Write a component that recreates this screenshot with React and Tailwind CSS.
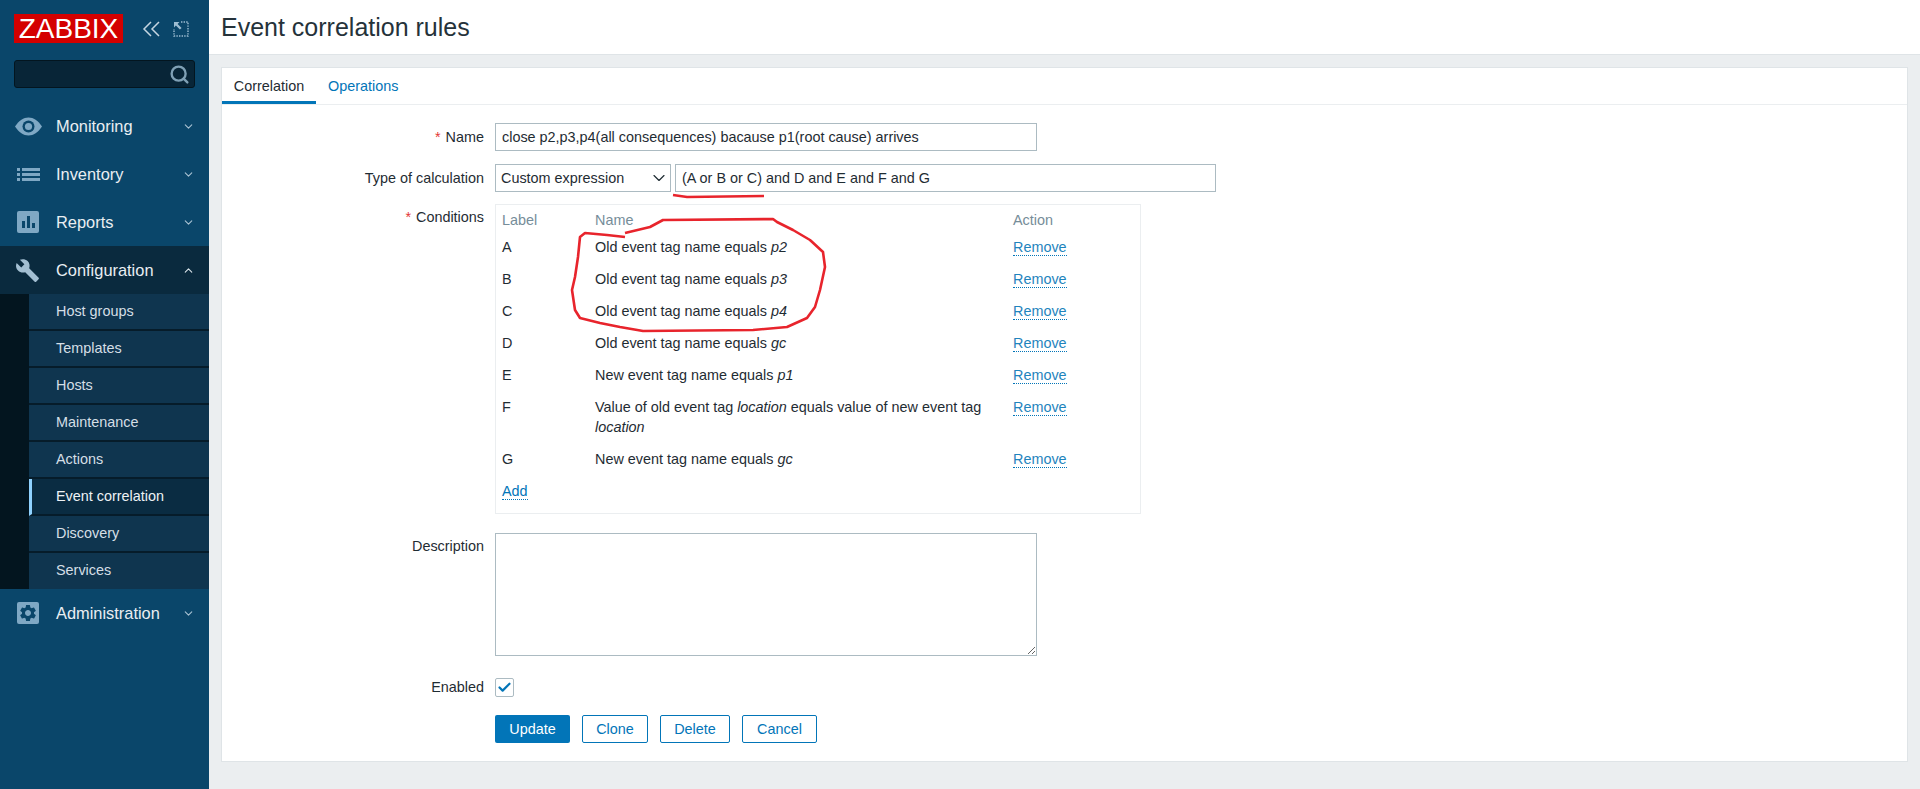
import React from "react";
import { ChevronDown, ChevronUp, Search, Check } from "lucide-react";
import { MdBuild, MdSettings } from "react-icons/md";

const subItems = ["Host groups", "Templates", "Hosts", "Maintenance", "Actions", "Event correlation", "Discovery", "Services"];

const conditions = [
  { label: "A", name: <>Old event tag name equals <i>p2</i></> },
  { label: "B", name: <>Old event tag name equals <i>p3</i></> },
  { label: "C", name: <>Old event tag name equals <i>p4</i></> },
  { label: "D", name: <>Old event tag name equals <i>gc</i></> },
  { label: "E", name: <>New event tag name equals <i>p1</i></> },
  { label: "F", name: <>Value of old event tag <i>location</i> equals value of new event tag <i>location</i></> },
  { label: "G", name: <>New event tag name equals <i>gc</i></> },
];

function EyeIcon() {
  return (
    <svg width="27" height="19" viewBox="0 0 27 19" className="-ml-[2px] text-[#7fa8c4]">
      <path fill="currentColor" d="M0 9.5C4 3.5 8.5.5 13.5.5S23 3.5 27 9.5C23 15.5 18.5 18.5 13.5 18.5S4 15.5 0 9.5Z" />
      <circle cx="13.5" cy="9.5" r="6" fill="#0a466a" />
      <circle cx="13.5" cy="9.5" r="3.6" fill="#7fa8c4" />
    </svg>
  );
}

function ListIcon() {
  return (
    <svg width="23" height="13" viewBox="0 0 23 13" fill="#7fa8c4">
      <rect x="0" y="0" width="3" height="3" />
      <rect x="5" y="0" width="18" height="3" />
      <rect x="0" y="5" width="3" height="3" />
      <rect x="5" y="5" width="18" height="3" />
      <rect x="0" y="10" width="3" height="3" />
      <rect x="5" y="10" width="18" height="3" />
    </svg>
  );
}

function ReportsIcon() {
  return (
    <svg width="22" height="22" viewBox="0 0 22 22">
      <rect width="22" height="22" rx="2" fill="#7fa8c4" />
      <rect x="5" y="10" width="3" height="7" fill="#0a466a" />
      <rect x="10" y="5" width="3" height="12" fill="#0a466a" />
      <rect x="15" y="12" width="3" height="5" fill="#0a466a" />
    </svg>
  );
}

function CollapseIcon() {
  return (
    <svg width="18" height="16" viewBox="0 0 18 16" fill="none" stroke="#c5d6e1" strokeWidth="1.5">
      <path d="M9 1L2 8L9 15" />
      <path d="M17 1L10 8L17 15" />
    </svg>
  );
}

function ExpandIcon() {
  return (
    <svg width="16" height="16" viewBox="0 0 16 16" fill="none" className="text-[#9dbdd2]">
      <path d="M8 1h7v14H1V8" stroke="currentColor" strokeWidth="1.4" strokeDasharray="1.4 1.2" />
      <path d="M1 1h5.5L4.6 2.9 8.6 6.9 6.9 8.6 2.9 4.6 1 6.5Z" fill="currentColor" />
    </svg>
  );
}

function NavItem({ icon, label, open, className = "" }) {
  return (
    <div className={`flex h-12 items-center ${open ? "bg-[#0a2a3e]" : ""} ${className}`}>
      <div className="flex w-[56px] shrink-0 justify-start pl-[17px]">{icon}</div>
      <span className="flex-1 text-[16.4px] text-[#e9eef2]">{label}</span>
      {open ? (
        <ChevronUp size={13} strokeWidth={2} className="mr-[14px] text-[#dbe4ea]" />
      ) : (
        <ChevronDown size={13} strokeWidth={2} className="mr-[14px] text-[#a9c2d3]" />
      )}
    </div>
  );
}

function SubItem({ label, last }) {
  const active = label === "Event correlation";
  return (
    <div
      className={`flex items-center text-[14.4px] ${last ? "h-[36px] pb-[3px]" : "h-[37px] border-b-2 border-[#061c2a] pb-[1px]"} ${
        active ? "border-l-[3px] border-l-[#8fd2ff] bg-[#0a2c42] pl-[24px] text-[#eef2f5]" : "bg-[#0f354f] pl-[27px] text-[#d5dfe6]"
      }`}
    >
      {label}
    </div>
  );
}

function Sidebar() {
  return (
    <aside className="w-[209px] shrink-0 bg-[#0a466a] pt-[14px]">
      <div className="flex h-[29px] items-center pl-[14px]">
        <div className="flex h-[29px] w-[109px] items-center justify-center bg-[#d40000] text-[28px] text-white">ZABBIX</div>
        <div className="ml-[19px]">
          <CollapseIcon />
        </div>
        <div className="ml-[13px]">
          <ExpandIcon />
        </div>
      </div>
      <div className="mx-[14px] mt-[17px] flex h-[28px] items-center justify-end rounded-[3px] border border-[#03151f] bg-[#082537] pr-[4px]">
        <Search size={21} strokeWidth={2.7} className="text-[#7fa0b5]" />
      </div>

      <nav className="mt-[14px]">
        <NavItem icon={<EyeIcon />} label="Monitoring" />
        <NavItem icon={<ListIcon />} label="Inventory" />
        <NavItem icon={<ReportsIcon />} label="Reports" />
        <NavItem icon={<MdBuild size={25} className="-ml-[2px] text-[#a3bfd2]" />} label="Configuration" open />
        <div className="bg-[#03151f] pl-[29px]">
          {subItems.map((item, i) => (
            <SubItem key={item} label={item} last={i === subItems.length - 1} />
          ))}
        </div>
        <NavItem
          icon={
            <div className="flex h-[22px] w-[22px] items-center justify-center rounded-[2px] bg-[#7fa8c4]">
              <MdSettings size={20} className="text-[#0a466a]" />
            </div>
          }
          label="Administration"
        />
      </nav>
    </aside>
  );
}

function FormRow({ label, required, top, children, className = "" }) {
  return (
    <div className={`flex ${className}`}>
      <div className={`w-[262px] shrink-0 text-right ${top ? "pt-[3px]" : "-mt-[1px] self-center"}`}>
        {required && <span className="mr-[5px] text-[#e33734]">*</span>}
        {label}
      </div>
      <div className="ml-[11px] min-w-0 flex-1">{children}</div>
    </div>
  );
}

function Remove() {
  return <a className="border-b border-dotted border-[#0275b8] leading-[16px] text-[#1f84bd]">Remove</a>;
}

function OutlineButton({ children, className = "" }) {
  return (
    <button className={`h-[28px] rounded-[2px] border border-[#0275b8] bg-white text-[#0275b8] ${className}`}>{children}</button>
  );
}

function ConditionsTable() {
  return (
    <div className="w-[646px] border border-[#ebeef0] pb-[6px] pl-[6px]">
      <div className="grid grid-cols-[93px_341px_1fr] pt-[5px] pb-[1px] text-[#768d99]">
        <div>Label</div>
        <div className="col-span-1">Name</div>
        <div className="pl-[77px]">Action</div>
      </div>
      {conditions.map((c) => (
        <div key={c.label} className="grid grid-cols-[93px_395px_1fr] py-[6px]">
          <div>{c.label}</div>
          <div>{c.name}</div>
          <div className="pl-[23px]">
            <Remove />
          </div>
        </div>
      ))}
      <div className="py-[6px]">
        <a className="border-b border-dotted border-[#0275b8] text-[#0275b8]">Add</a>
      </div>
    </div>
  );
}

function CorrelationForm() {
  return (
    <form className="pt-[18px]">
      <FormRow label="Name" required>
        <input
          readOnly
          value="close p2,p3,p4(all consequences) bacause p1(root cause) arrives"
          className="block h-[28px] w-[542px] border border-[#acbbc2] px-[6px] pb-[1px] text-[#1f2c33] outline-none"
        />
      </FormRow>

      <FormRow label="Type of calculation" className="mt-[13px]">
        <div className="flex gap-[4px]">
          <div className="flex h-[28px] w-[176px] items-center justify-between border border-[#acbbc2] pr-[1px] pb-[1px] pl-[5px]">
            <span>Custom expression</span>
            <ChevronDown size={20} strokeWidth={1.4} className="text-[#1f2c33]" />
          </div>
          <input
            readOnly
            value="(A or B or C) and D and E and F and G"
            className="block h-[28px] w-[541px] border border-[#acbbc2] px-[6px] pb-[1px] text-[#1f2c33] outline-none"
          />
        </div>
      </FormRow>

      <FormRow label="Conditions" required top className="mt-[12px]">
        <ConditionsTable />
      </FormRow>

      <FormRow label="Description" top className="mt-[19px]">
        <textarea readOnly className="block h-[123px] w-[542px] border border-[#acbbc2] outline-none" />
      </FormRow>

      <FormRow label="Enabled" className="mt-[22px]">
        <div className="flex h-[19px] w-[19px] items-center justify-center rounded-[2px] border border-[#acbbc2]">
          <Check size={15} strokeWidth={3.5} className="text-[#0275b8]" />
        </div>
      </FormRow>

      <div className="mt-[18px] ml-[273px] flex gap-[12px]">
        <button className="h-[28px] w-[75px] rounded-[2px] bg-[#0275b8] text-white">Update</button>
        <OutlineButton className="w-[66px]">Clone</OutlineButton>
        <OutlineButton className="w-[70px]">Delete</OutlineButton>
        <OutlineButton className="w-[75px]">Cancel</OutlineButton>
      </div>
    </form>
  );
}

// hand drawn red marks on top of the screenshot
function Annotations() {
  return (
    <svg className="pointer-events-none absolute top-0 left-0 h-[789px] w-[1920px]" viewBox="0 0 1920 789" fill="none">
      <path
        d="M625 237L607 235L585 233L580 237L578 257L575 277L572 290L575 310L580 318L600 323L620 327L643 331L753 330L787 327L807 318L815 307L820 290L825 267L823 252L810 240L793 230L777 222L773 219L663 220L650 227L625 233"
        stroke="#e8242c"
        strokeWidth="2.6"
        strokeLinejoin="round"
      />
      <path d="M673 195L687 197L764 196" stroke="#e8242c" strokeWidth="2.6" />
    </svg>
  );
}

export default function App() {
  return (
    <div className="relative flex h-[789px] w-[1920px] overflow-hidden bg-[#ebeef0] font-['Liberation_Sans',Arial,sans-serif] text-[14.4px] leading-[20px] text-[#1f2c33]">
      <Sidebar />
      <main className="flex min-w-0 flex-1 flex-col">
        <header className="flex h-[55px] items-center border-b border-[#dfe4e7] bg-white pl-[12px] text-[25px] text-[#25323a]">Event correlation rules</header>
        <section className="mx-[12px] mt-[12px] h-[695px] border border-[#dfe4e7] bg-white">
          <div className="flex h-[37px] border-b border-[#ebeef0]">
            <div className="flex w-[94px] items-center justify-center border-b-[3px] border-[#0275b8] pt-[2px]">Correlation</div>
            <div className="flex items-center pb-[1px] pl-[12px] text-[#0275b8]">Operations</div>
          </div>
          <CorrelationForm />
        </section>
      </main>
      <Annotations />
    </div>
  );
}
